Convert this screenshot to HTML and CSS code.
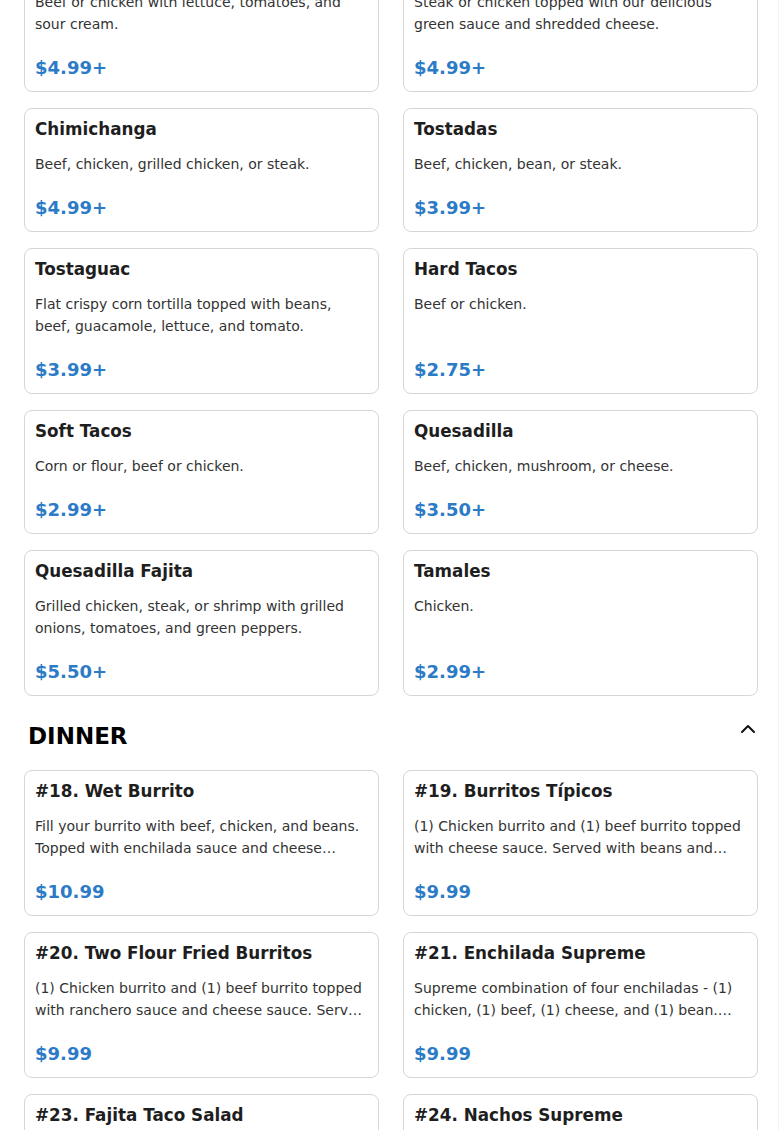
FILE: index.html
```html
<!DOCTYPE html>
<html lang="en">
<head>
<meta charset="utf-8">
<title>Menu</title>
<link rel="stylesheet" href="styles.css">
</head>
<body>
<main class="page">
  <section class="section section-lunch">
    <div class="grid">
      <article class="card">
        <h3 class="card-title">Taco Salad</h3>
        <p class="card-desc">Beef or chicken with lettuce, tomatoes, and sour cream.</p>
        <p class="card-price">$4.99+</p>
      </article>
      <article class="card">
        <h3 class="card-title">Chile Verde</h3>
        <p class="card-desc">Steak or chicken topped with our delicious green sauce and shredded cheese.</p>
        <p class="card-price">$4.99+</p>
      </article>
      <article class="card">
        <h3 class="card-title">Chimichanga</h3>
        <p class="card-desc">Beef, chicken, grilled chicken, or steak.</p>
        <p class="card-price">$4.99+</p>
      </article>
      <article class="card">
        <h3 class="card-title">Tostadas</h3>
        <p class="card-desc">Beef, chicken, bean, or steak.</p>
        <p class="card-price">$3.99+</p>
      </article>
      <article class="card">
        <h3 class="card-title">Tostaguac</h3>
        <p class="card-desc">Flat crispy corn tortilla topped with beans, beef, guacamole, lettuce, and tomato.</p>
        <p class="card-price">$3.99+</p>
      </article>
      <article class="card">
        <h3 class="card-title">Hard Tacos</h3>
        <p class="card-desc">Beef or chicken.</p>
        <p class="card-price">$2.75+</p>
      </article>
      <article class="card">
        <h3 class="card-title">Soft Tacos</h3>
        <p class="card-desc">Corn or flour, beef or chicken.</p>
        <p class="card-price">$2.99+</p>
      </article>
      <article class="card">
        <h3 class="card-title">Quesadilla</h3>
        <p class="card-desc">Beef, chicken, mushroom, or cheese.</p>
        <p class="card-price">$3.50+</p>
      </article>
      <article class="card">
        <h3 class="card-title">Quesadilla Fajita</h3>
        <p class="card-desc">Grilled chicken, steak, or shrimp with grilled onions, tomatoes, and green peppers.</p>
        <p class="card-price">$5.50+</p>
      </article>
      <article class="card">
        <h3 class="card-title">Tamales</h3>
        <p class="card-desc">Chicken.</p>
        <p class="card-price">$2.99+</p>
      </article>
    </div>
  </section>

  <section class="section">
    <header class="section-head">
      <h2 class="section-title">DINNER</h2>
      <button class="toggle" type="button" aria-label="Collapse">
        <svg width="20" height="20" viewBox="0 0 20 20" aria-hidden="true"><polyline points="4,13 10,7 16,13" fill="none" stroke="#111" stroke-width="2" stroke-linecap="round" stroke-linejoin="round"/></svg>
      </button>
    </header>
    <div class="grid">
      <article class="card">
        <h3 class="card-title">#18. Wet Burrito</h3>
        <p class="card-desc clamp">Fill your burrito with beef, chicken, and beans. Topped with enchilada sauce and cheese sauce. Served with rice and beans.</p>
        <p class="card-price">$10.99</p>
      </article>
      <article class="card">
        <h3 class="card-title">#19. Burritos Típicos</h3>
        <p class="card-desc clamp">(1) Chicken burrito and (1) beef burrito topped with cheese sauce. Served with beans and rice.</p>
        <p class="card-price">$9.99</p>
      </article>
      <article class="card">
        <h3 class="card-title">#20. Two Flour Fried Burritos</h3>
        <p class="card-desc clamp">(1) Chicken burrito and (1) beef burrito topped with ranchero sauce and cheese sauce. Served with rice and beans.</p>
        <p class="card-price">$9.99</p>
      </article>
      <article class="card">
        <h3 class="card-title">#21. Enchilada Supreme</h3>
        <p class="card-desc clamp">Supreme combination of four enchiladas - (1) chicken, (1) beef, (1) cheese, and (1) bean. Topped with lettuce, tomato and sour cream.</p>
        <p class="card-price">$9.99</p>
      </article>
      <article class="card">
        <h3 class="card-title">#23. Fajita Taco Salad</h3>
        <p class="card-desc clamp">Grilled chicken or steak with onions, tomatoes and green peppers in a crispy shell.</p>
        <p class="card-price">$9.99</p>
      </article>
      <article class="card">
        <h3 class="card-title">#24. Nachos Supreme</h3>
        <p class="card-desc clamp">Chips topped with beef, chicken, beans, cheese, lettuce, tomato and sour cream.</p>
        <p class="card-price">$9.99</p>
      </article>
    </div>
  </section>
</main>
</body>
</html>
```

FILE: styles.css
```css
html, body {
  margin: 0;
  padding: 0;
  background: #ffffff;
}

body {
  font-family: "DejaVu Sans", "Noto Sans", sans-serif;
  color: #222;
}

.page {
  width: 779px;
  box-sizing: border-box;
  padding: 0 20px 40px 24px;
  border-right: 1px solid #f2f2f2;
}

.section-lunch {
  margin-top: -54px;
}

.grid {
  display: grid;
  grid-template-columns: 1fr 1fr;
  column-gap: 24px;
  row-gap: 16px;
}

.card {
  display: flex;
  flex-direction: column;
  border: 1px solid #d6d6d6;
  border-radius: 8px;
  padding: 10px;
  background: #fff;
}

.card-title {
  margin: 0 0 13px;
  font-size: 16.8px;
  line-height: 21px;
  font-weight: bold;
  color: #1e1e1e;
}

.card-desc {
  margin: 0;
  font-size: 14px;
  line-height: 22px;
  color: #333;
}

.clamp {
  display: -webkit-box;
  -webkit-line-clamp: 2;
  -webkit-box-orient: vertical;
  overflow: hidden;
}

.card-price {
  margin: auto 0 0;
  padding-top: 19px;
  font-size: 18px;
  line-height: 27px;
  font-weight: bold;
  color: #2b7bc6;
}

.section-head {
  display: flex;
  justify-content: space-between;
  align-items: flex-start;
  margin: 26px 0 20px;
  padding: 0 0 0 4px;
}

.section-title {
  margin: 0;
  font-size: 23px;
  line-height: 28px;
  font-weight: bold;
  color: #000;
}

.toggle {
  margin-top: -3px;
  padding: 0;
  border: 0;
  background: none;
  width: 20px;
  height: 20px;
  display: flex;
}
```
